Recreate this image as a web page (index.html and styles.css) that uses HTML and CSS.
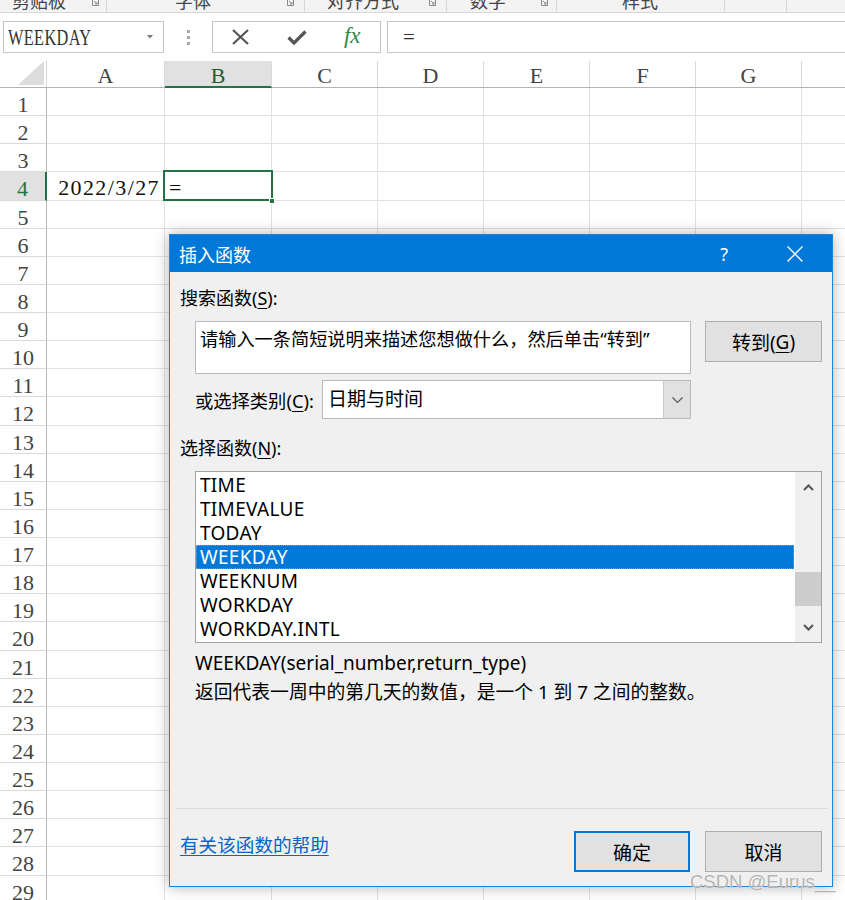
FILE: index.html
```html
<!DOCTYPE html>
<html lang="zh-CN">
<head>
<meta charset="utf-8">
<title>插入函数</title>
<link rel="stylesheet" href="styles.css">
</head>
<body>
<div class="ribbon">
  <div class="grp g1"><span class="glbl">剪贴板</span><svg class="launch" width="7" height="6" viewBox="0 0 7 6"><path d="M0.5 0V5.5H6.5V0M2 1L5 4M5 2V4H3" fill="none" stroke="#8a8a8a" stroke-width="1"/></svg></div>
  <div class="grp g2"><span class="glbl">字体</span><svg class="launch" width="7" height="6" viewBox="0 0 7 6"><path d="M0.5 0V5.5H6.5V0M2 1L5 4M5 2V4H3" fill="none" stroke="#8a8a8a" stroke-width="1"/></svg></div>
  <div class="grp g3"><span class="glbl">对齐方式</span><svg class="launch" width="7" height="6" viewBox="0 0 7 6"><path d="M0.5 0V5.5H6.5V0M2 1L5 4M5 2V4H3" fill="none" stroke="#8a8a8a" stroke-width="1"/></svg></div>
  <div class="grp g4"><span class="glbl">数字</span><svg class="launch" width="7" height="6" viewBox="0 0 7 6"><path d="M0.5 0V5.5H6.5V0M2 1L5 4M5 2V4H3" fill="none" stroke="#8a8a8a" stroke-width="1"/></svg></div>
  <div class="grp g5"><span class="glbl">样式</span></div>
  <div class="grp g6"></div>
  <div class="grp g7"></div>
</div>

<div class="fbar">
  <div class="namebox"><span class="nb-text">WEEKDAY</span><svg class="nb-arrow" width="6" height="4" viewBox="0 0 6 4"><path d="M0 0H6L3 3.5Z" fill="#7a7a7a"/></svg></div>
  <div class="dots"><i></i><i></i><i></i></div>
  <div class="fxbox">
    <span class="fxcell"><svg width="17" height="16" viewBox="0 0 17 16"><path d="M1 1L16 15M16 1L1 15" stroke="#555" stroke-width="2.2" fill="none"/></svg></span>
    <span class="fxcell"><svg width="20" height="15" viewBox="0 0 20 15"><path d="M1.5 7.5L7 13L18.5 1.5" stroke="#555" stroke-width="3.2" fill="none"/></svg></span>
    <span class="fxcell fx">fx</span>
  </div>
  <div class="finput">=</div>
</div>

<div class="sheet">
  <div class="hrow">
    <div class="corner"><svg width="26" height="24" viewBox="0 0 26 24"><path d="M26 0V24H0Z" fill="#dcdcdc"/></svg></div>
    <div class="ch">A</div><div class="ch on">B</div><div class="ch">C</div><div class="ch">D</div><div class="ch">E</div><div class="ch">F</div><div class="ch">G</div><div class="ch last"></div>
  </div>
  <div class="r"><div class="rh">1</div><div class="c"></div><div class="c"></div><div class="c"></div><div class="c"></div><div class="c"></div><div class="c"></div><div class="c"></div><div class="c last"></div></div>
  <div class="r"><div class="rh">2</div><div class="c"></div><div class="c"></div><div class="c"></div><div class="c"></div><div class="c"></div><div class="c"></div><div class="c"></div><div class="c last"></div></div>
  <div class="r"><div class="rh">3</div><div class="c"></div><div class="c"></div><div class="c"></div><div class="c"></div><div class="c"></div><div class="c"></div><div class="c"></div><div class="c last"></div></div>
  <div class="r cur"><div class="rh">4</div><div class="c date">2022/3/27</div><div class="c active">=<span class="handle"></span></div><div class="c"></div><div class="c"></div><div class="c"></div><div class="c"></div><div class="c"></div><div class="c last"></div></div>
  <div class="r"><div class="rh">5</div><div class="c"></div><div class="c"></div><div class="c"></div><div class="c"></div><div class="c"></div><div class="c"></div><div class="c"></div><div class="c last"></div></div>
  <div class="r"><div class="rh">6</div><div class="c"></div><div class="c"></div><div class="c"></div><div class="c"></div><div class="c"></div><div class="c"></div><div class="c"></div><div class="c last"></div></div>
  <div class="r"><div class="rh">7</div><div class="c"></div><div class="c"></div><div class="c"></div><div class="c"></div><div class="c"></div><div class="c"></div><div class="c"></div><div class="c last"></div></div>
  <div class="r"><div class="rh">8</div><div class="c"></div><div class="c"></div><div class="c"></div><div class="c"></div><div class="c"></div><div class="c"></div><div class="c"></div><div class="c last"></div></div>
  <div class="r"><div class="rh">9</div><div class="c"></div><div class="c"></div><div class="c"></div><div class="c"></div><div class="c"></div><div class="c"></div><div class="c"></div><div class="c last"></div></div>
  <div class="r"><div class="rh">10</div><div class="c"></div><div class="c"></div><div class="c"></div><div class="c"></div><div class="c"></div><div class="c"></div><div class="c"></div><div class="c last"></div></div>
  <div class="r"><div class="rh">11</div><div class="c"></div><div class="c"></div><div class="c"></div><div class="c"></div><div class="c"></div><div class="c"></div><div class="c"></div><div class="c last"></div></div>
  <div class="r"><div class="rh">12</div><div class="c"></div><div class="c"></div><div class="c"></div><div class="c"></div><div class="c"></div><div class="c"></div><div class="c"></div><div class="c last"></div></div>
  <div class="r"><div class="rh">13</div><div class="c"></div><div class="c"></div><div class="c"></div><div class="c"></div><div class="c"></div><div class="c"></div><div class="c"></div><div class="c last"></div></div>
  <div class="r"><div class="rh">14</div><div class="c"></div><div class="c"></div><div class="c"></div><div class="c"></div><div class="c"></div><div class="c"></div><div class="c"></div><div class="c last"></div></div>
  <div class="r"><div class="rh">15</div><div class="c"></div><div class="c"></div><div class="c"></div><div class="c"></div><div class="c"></div><div class="c"></div><div class="c"></div><div class="c last"></div></div>
  <div class="r"><div class="rh">16</div><div class="c"></div><div class="c"></div><div class="c"></div><div class="c"></div><div class="c"></div><div class="c"></div><div class="c"></div><div class="c last"></div></div>
  <div class="r"><div class="rh">17</div><div class="c"></div><div class="c"></div><div class="c"></div><div class="c"></div><div class="c"></div><div class="c"></div><div class="c"></div><div class="c last"></div></div>
  <div class="r"><div class="rh">18</div><div class="c"></div><div class="c"></div><div class="c"></div><div class="c"></div><div class="c"></div><div class="c"></div><div class="c"></div><div class="c last"></div></div>
  <div class="r"><div class="rh">19</div><div class="c"></div><div class="c"></div><div class="c"></div><div class="c"></div><div class="c"></div><div class="c"></div><div class="c"></div><div class="c last"></div></div>
  <div class="r"><div class="rh">20</div><div class="c"></div><div class="c"></div><div class="c"></div><div class="c"></div><div class="c"></div><div class="c"></div><div class="c"></div><div class="c last"></div></div>
  <div class="r"><div class="rh">21</div><div class="c"></div><div class="c"></div><div class="c"></div><div class="c"></div><div class="c"></div><div class="c"></div><div class="c"></div><div class="c last"></div></div>
  <div class="r"><div class="rh">22</div><div class="c"></div><div class="c"></div><div class="c"></div><div class="c"></div><div class="c"></div><div class="c"></div><div class="c"></div><div class="c last"></div></div>
  <div class="r"><div class="rh">23</div><div class="c"></div><div class="c"></div><div class="c"></div><div class="c"></div><div class="c"></div><div class="c"></div><div class="c"></div><div class="c last"></div></div>
  <div class="r"><div class="rh">24</div><div class="c"></div><div class="c"></div><div class="c"></div><div class="c"></div><div class="c"></div><div class="c"></div><div class="c"></div><div class="c last"></div></div>
  <div class="r"><div class="rh">25</div><div class="c"></div><div class="c"></div><div class="c"></div><div class="c"></div><div class="c"></div><div class="c"></div><div class="c"></div><div class="c last"></div></div>
  <div class="r"><div class="rh">26</div><div class="c"></div><div class="c"></div><div class="c"></div><div class="c"></div><div class="c"></div><div class="c"></div><div class="c"></div><div class="c last"></div></div>
  <div class="r"><div class="rh">27</div><div class="c"></div><div class="c"></div><div class="c"></div><div class="c"></div><div class="c"></div><div class="c"></div><div class="c"></div><div class="c last"></div></div>
  <div class="r"><div class="rh">28</div><div class="c"></div><div class="c"></div><div class="c"></div><div class="c"></div><div class="c"></div><div class="c"></div><div class="c"></div><div class="c last"></div></div>
  <div class="r"><div class="rh">29</div><div class="c"></div><div class="c"></div><div class="c"></div><div class="c"></div><div class="c"></div><div class="c"></div><div class="c"></div><div class="c last"></div></div>
</div>

<div class="dialog">
  <div class="titlebar">
    <span class="ttl">插入函数</span>
    <span class="help">?</span>
    <span class="close"><svg width="16" height="16" viewBox="0 0 16 16"><path d="M0.5 0.5L15.5 15.5M15.5 0.5L0.5 15.5" stroke="#fff" stroke-width="1.4" fill="none"/></svg></span>
  </div>
  <div class="dbody">
    <div class="lbl lbl-search">搜索函数(<u>S</u>):</div>
    <div class="search-row">
      <div class="search-box">请输入一条简短说明来描述您想做什么，然后单击“转到”</div>
      <div class="btn go">转到(<u>G</u>)</div>
    </div>
    <div class="cat-row">
      <span class="cat-lbl">或选择类别(<u>C</u>):</span>
      <div class="select"><span class="sel-text">日期与时间</span><span class="sel-btn"><svg width="11" height="6" viewBox="0 0 11 6"><path d="M0.5 0.5L5.5 5.5L10.5 0.5" stroke="#555" stroke-width="1.1" fill="none"/></svg></span></div>
    </div>
    <div class="lbl lbl-fn">选择函数(<u>N</u>):</div>
    <div class="list">
      <div class="items">
        <div class="item">TIME</div>
        <div class="item">TIMEVALUE</div>
        <div class="item">TODAY</div>
        <div class="item sel">WEEKDAY</div>
        <div class="item">WEEKNUM</div>
        <div class="item">WORKDAY</div>
        <div class="item">WORKDAY.INTL</div>
      </div>
      <div class="vscroll">
        <div class="arrow"><svg width="11" height="7" viewBox="0 0 11 7"><path d="M1 6L5.5 1.5L10 6" stroke="#555" stroke-width="2" fill="none"/></svg></div>
        <div class="track"><div class="thumb"></div></div>
        <div class="arrow"><svg width="11" height="7" viewBox="0 0 11 7"><path d="M1 1L5.5 5.5L10 1" stroke="#555" stroke-width="2" fill="none"/></svg></div>
      </div>
    </div>
    <div class="syntax">WEEKDAY(serial_number,return_type)</div>
    <div class="desc">返回代表一周中的第几天的数值，是一个 1 到 7 之间的整数。</div>
    <div class="sep"></div>
    <div class="footer">
      <a class="helplink" href="#">有关该函数的帮助</a>
      <div class="btn ok">确定</div>
      <div class="btn cancel">取消</div>
    </div>
  </div>
</div>

<div class="watermark">CSDN @Eurus__</div>
</body>
</html>
```

FILE: styles.css
```css
* { box-sizing: border-box; }

body {
  margin: 0;
  width: 845px;
  height: 900px;
  overflow: hidden;
  background: #fff;
  position: relative;
  font-family: "Liberation Serif", "Noto Sans CJK SC", serif;
}

/* ribbon (cut off at the top of the screenshot) */
.ribbon {
  height: 13px;
  background: #f3f3f3;
  border-bottom: 1px solid #d8d8d8;
  display: flex;
  overflow: hidden;
}
.grp {
  display: flex;
  align-items: flex-start;
  border-right: 1px solid #d6d6d6;
  height: 12px;
}
.glbl {
  font-family: "Noto Sans CJK SC", sans-serif;
  font-size: 18px;
  line-height: 18px;
  margin-top: -9px;
  color: #444;
}
.launch { margin-left: auto; }
.g1 { width: 107px; padding-left: 12px; padding-right: 7px; }
.g2 { width: 198px; padding-left: 68px; padding-right: 10px; }
.g3 { width: 142px; padding-left: 22px; padding-right: 10px; }
.g4 { width: 110px; padding-left: 23px; padding-right: 8px; }
.g5 { width: 168px; padding-left: 65px; }
.g6 { width: 62px; }
.g7 { flex: 1; border-right: none; }

/* formula bar */
.fbar {
  height: 48px;
  padding-top: 8px;
  display: flex;
  align-items: flex-start;
}
.namebox {
  margin-left: 3px;
  width: 161px;
  height: 32px;
  border: 1px solid #c6c6c6;
  background: #fff;
  display: flex;
  align-items: center;
  padding-left: 4px;
  padding-right: 10px;
}
.nb-text {
  display: inline-block;
  font-size: 23px;
  line-height: 30px;
  padding-top: 2px;
  color: #333;
  transform: scaleX(0.71);
  transform-origin: left center;
  letter-spacing: 0.5px;
}
.nb-arrow { margin-left: auto; }
.dots {
  width: 48px;
  height: 32px;
  display: flex;
  flex-direction: column;
  align-items: center;
  justify-content: center;
  gap: 3px;
}
.dots i {
  width: 3px;
  height: 3px;
  background: #a8a8a8;
  display: block;
}
.fxbox {
  width: 169px;
  height: 32px;
  border: 1px solid #c6c6c6;
  background: #fff;
  display: flex;
}
.fxcell {
  width: 56px;
  display: flex;
  align-items: center;
  justify-content: center;
}
.fx {
  font-family: "Liberation Serif", serif;
  font-style: italic;
  font-size: 23px;
  color: #2b8a4a;
  padding-bottom: 2px;
}
.finput {
  flex: 1;
  margin-left: 6px;
  height: 32px;
  border: 1px solid #c6c6c6;
  border-right: none;
  padding-left: 15px;
  font-size: 21px;
  line-height: 30px;
  color: #333;
}

/* sheet */
.sheet { width: 845px; }
.hrow {
  display: flex;
  height: 27px;
  border-bottom: 1px solid #b4b4b4;
}
.corner {
  width: 47px;
  border-right: 1px solid #d4d4d4;
  display: flex;
  align-items: flex-end;
  justify-content: flex-end;
  padding: 0 2px 2px 0;
}
.ch {
  border-right: 1px solid #d9d9d9;
  text-align: center;
  font-size: 22px;
  line-height: 30px;
  color: #444;
}
.ch.on {
  background: #e1e1e1;
  color: #1f5c33;
  border-bottom: 2px solid #217346;
  margin-bottom: -1px;
}
.hrow .ch:nth-child(2), .r .c:nth-child(2) { width: 118px; }
.hrow .ch:nth-child(3), .r .c:nth-child(3) { width: 107px; }
.hrow .ch:nth-child(n+4), .r .c:nth-child(n+4) { width: 106px; }
.hrow .last, .r .last { flex: 1; border-right: none; }

.r {
  display: flex;
  height: 28.14px;
}
.rh {
  width: 47px;
  border-right: 1px solid #b8b8b8;
  border-bottom: 1px solid #dadada;
  text-align: center;
  font-size: 22px;
  line-height: 33px;
  color: #444;
}
.c {
  border-right: 1px solid #e1e1e1;
  border-bottom: 1px solid #e1e1e1;
  font-size: 22px;
  line-height: 32px;
  color: #111;
}
.r.cur .rh {
  background: #e1e1e1;
  color: #217346;
  border-right: 2px solid #217346;
}
.c.date {
  text-align: right;
  padding-right: 4px;
  letter-spacing: 1.4px;
}
.c.active {
  position: relative;
  padding-left: 4px;
}
.c.active::after {
  content: "";
  position: absolute;
  left: -2px;
  top: -2px;
  right: -2px;
  bottom: -1px;
  border: 2px solid #217346;
}
.handle {
  position: absolute;
  right: -4px;
  bottom: -4px;
  width: 6px;
  height: 6px;
  background: #217346;
  border: 1px solid #fff;
  z-index: 2;
}

/* dialog */
.dialog {
  position: absolute;
  left: 169px;
  top: 234px;
  width: 664px;
  height: 653px;
  border: 1px solid #1c83d6;
  background: #f0f0f0;
  box-shadow: 0 0 14px rgba(0, 0, 0, 0.3);
  font-family: "Noto Sans", "Noto Sans CJK SC", sans-serif;
  color: #000;
  display: flex;
  flex-direction: column;
}
.titlebar {
  height: 37px;
  background: #0078d7;
  color: #fff;
  display: flex;
  align-items: center;
  padding-left: 9px;
  flex-shrink: 0;
}
.ttl {
  font-family: "Noto Sans CJK SC", sans-serif;
  font-size: 18px;
}
.help {
  margin-left: auto;
  font-size: 18px;
  margin-right: 59px;
}
.close {
  display: flex;
  margin-right: 29px;
}
.dbody {
  flex: 1;
  padding: 0 10px;
  display: flex;
  flex-direction: column;
  font-size: 18px;
}
.lbl {
  line-height: 24px;
  height: 24px;
}
.lbl-search { margin-top: 14px; }
u { text-decoration-thickness: 1px; text-underline-offset: 3px; }
.search-row {
  margin-top: 11px;
  margin-left: 15px;
  display: flex;
  align-items: flex-start;
}
.search-box {
  width: 496px;
  height: 53px;
  background: #fff;
  border: 1px solid #b9b9b9;
  padding: 4px 0 0 4px;
  font-size: 18.2px;
  line-height: 26px;
}
.btn {
  background: #e1e1e1;
  border: 1px solid #adadad;
  display: flex;
  align-items: center;
  justify-content: center;
  height: 41px;
}
.go {
  margin-left: 14px;
  width: 117px;
  font-size: 19px;
}
.cat-row {
  margin-top: 6px;
  margin-left: 15px;
  height: 39px;
  display: flex;
  align-items: center;
}
.cat-lbl {
  width: 127px;
  white-space: nowrap;
  font-size: 18.3px;
}
.select {
  width: 369px;
  height: 39px;
  background: #fff;
  border: 1px solid #b9b9b9;
  display: flex;
  align-items: stretch;
}
.sel-text {
  flex: 1;
  padding-left: 5px;
  line-height: 37px;
  font-size: 19px;
}
.sel-btn {
  width: 27px;
  background: #e1e1e1;
  border-left: 1px solid #c8c8c8;
  display: flex;
  align-items: center;
  justify-content: center;
}
.lbl-fn { margin-top: 17px; }
.list {
  margin-top: 11px;
  margin-left: 15px;
  width: 627px;
  height: 172px;
  background: #fff;
  border: 1px solid #a3a3a3;
  display: flex;
}
.items {
  flex: 1;
  padding-top: 1px;
  padding-right: 1px;
}
.item {
  height: 24px;
  line-height: 24px;
  padding-left: 4px;
  font-size: 19px;
  letter-spacing: 0.3px;
}
.item.sel {
  background: #0078d7;
  color: #fff;
  outline: 1px dotted #6f9fcf;
  outline-offset: -1px;
}
.vscroll {
  width: 26px;
  background: #f0f0f0;
  display: flex;
  flex-direction: column;
}
.arrow {
  height: 30px;
  display: flex;
  align-items: center;
  justify-content: center;
}
.track { flex: 1; }
.thumb {
  margin-top: 70px;
  height: 34px;
  background: #cdcdcd;
}
.syntax {
  margin-top: 8px;
  margin-left: 15px;
  line-height: 24px;
  font-size: 19px;
}
.desc {
  margin-top: 5px;
  margin-left: 15px;
  line-height: 24px;
  font-size: 18.8px;
}
.sep {
  margin: 104px -6px 0 -4px;
  height: 1px;
  background: #dcdcdc;
}
.footer {
  margin-top: 22px;
  display: flex;
  align-items: flex-start;
}
.helplink {
  margin-top: 2px;
  line-height: 24px;
  color: #0066cc;
  text-decoration: underline;
  text-underline-offset: 3px;
  font-size: 18.6px;
}
.ok {
  margin-left: auto;
  width: 116px;
  height: 41px;
  border: 2px solid #0078d7;
  font-size: 19px;
}
.cancel {
  margin-left: 15px;
  width: 117px;
  height: 41px;
  font-size: 19px;
}

.watermark {
  position: absolute;
  left: 690px;
  top: 870px;
  font-family: "Liberation Sans", sans-serif;
  font-size: 18.5px;
  line-height: 24px;
  color: #b4b4b4;
  text-shadow: 0 0 1px #fff;
  white-space: nowrap;
}
```
